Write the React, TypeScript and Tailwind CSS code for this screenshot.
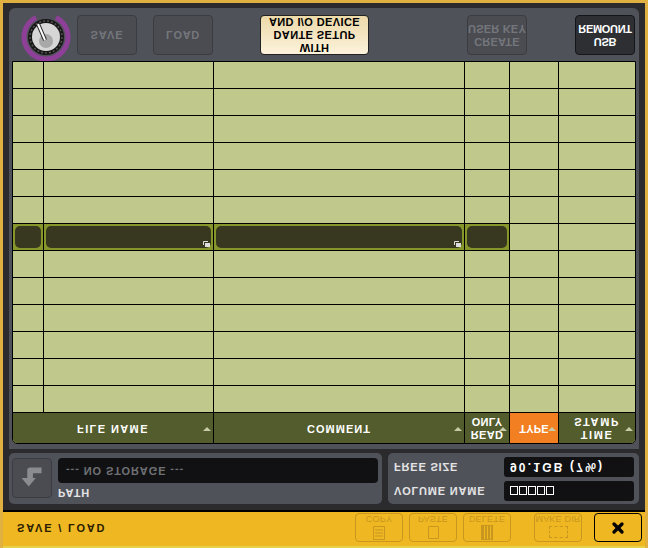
import type { ReactNode } from 'react';
import { X } from 'lucide-react';

const COLS = 'grid grid-cols-[31px_170px_251px_45px_49px_1fr]';
const ROW_COUNT = 13;
const SELECTED_ROW = 6;

// the whole screen is mirrored top to bottom, so every label is too
function Flip({ children, className = '' }: { children: ReactNode; className?: string }) {
  return <div className={`-scale-y-100 whitespace-nowrap ${className}`}>{children}</div>;
}

function Knob() {
  return (
    <svg width="52" height="52" viewBox="0 0 52 52" className="shrink-0">
      <path d="M16 8.4 A 22 22 0 1 0 36 8.4" fill="none" stroke="#8e3f98" strokeWidth="5" />
      <circle cx="26" cy="28" r="18" fill="#161616" />
      <circle cx="26" cy="28" r="16" fill="none" stroke="#555" strokeWidth="1.5" strokeDasharray="2 2" />
      <circle cx="26" cy="28" r="14" fill="#d6d6d6" />
      <circle cx="26" cy="32" r="7" fill="#a8a8a8" />
      <line x1="18" y1="15" x2="25" y2="31" stroke="#222" strokeWidth="4" />
      <line x1="18" y1="15" x2="25" y2="31" stroke="#fff" strokeWidth="2" />
    </svg>
  );
}

function TopButton({ lines, kind, width, tracking }: { lines: string[]; kind: 'off' | 'lit' | 'dark'; width: string; tracking: string }) {
  const look = {
    off: 'border-[#3a3c42] bg-[#4a4c52] text-[#74767b]',
    lit: 'border-[#222] bg-gradient-to-b from-[#ecd9a8] to-[#fdf3dc] text-black',
    dark: 'border-[#15161a] bg-[#2d2f33] text-white',
  }[kind];
  return (
    <div className={`flex h-10 items-center justify-center rounded-[4px] border ${look} ${width}`}>
      <Flip className={`text-center text-[11px] leading-[13px] font-bold ${tracking}`}>
        {lines.map(l => <div key={l}>{l}</div>)}
      </Flip>
    </div>
  );
}

function SortMark() {
  return <span className="absolute top-[14px] right-[2px] h-0 w-0 border-x-[4px] border-b-[4px] border-x-transparent border-b-[#c9cba8]" />;
}

function HeaderCell({ lines, active, border = true, tracking }: { lines: string[]; active?: boolean; border?: boolean; tracking: string }) {
  return (
    <div className={`relative flex items-center justify-center ${active ? 'bg-[#f27f22]' : ''} ${border ? 'border-r border-black' : ''}`}>
      <Flip className={`text-center text-[11px] leading-[13px] font-bold text-white ${tracking}`}>
        {lines.map(l => <div key={l}>{l}</div>)}
      </Flip>
      <SortMark />
    </div>
  );
}

function DarkField({ corner }: { corner?: boolean }) {
  return (
    <div className="relative flex items-stretch border-r border-black bg-[#87962a] p-[2px]">
      <div className="w-full rounded-[5px] bg-[#37381f]" />
      {corner && (
        <svg width="7" height="6" viewBox="0 0 7 6" className="absolute right-[3px] bottom-[3px]">
          <path d="M0.5 4 V0.5 H5" fill="none" stroke="#ddd" />
          <rect x="2" y="2" width="5" height="4" fill="#ddd" />
        </svg>
      )}
    </div>
  );
}

function Row({ selected }: { selected: boolean }) {
  if (selected) {
    return (
      <div className={`${COLS} h-[27px] border-b border-black`}>
        <DarkField />
        <DarkField corner />
        <DarkField corner />
        <DarkField />
        <div className="border-r border-black" />
        <div />
      </div>
    );
  }
  return (
    <div className={`${COLS} h-[27px] border-b border-black`}>
      {[0, 1, 2, 3, 4].map(i => <div key={i} className="border-r border-black" />)}
      <div />
    </div>
  );
}

function ToolButton({ label, icon }: { label: string; icon: ReactNode }) {
  return (
    <div className="flex h-[29px] w-[48px] flex-col items-center overflow-hidden rounded-[4px] border border-[#c9961e] text-[#c9961e]">
      <Flip className="text-[9px] leading-[10px] tracking-[0.2px]">{label}</Flip>
      {icon}
    </div>
  );
}

function InfoRow({ label, children }: { label: string; children: ReactNode }) {
  return (
    <div className="flex items-center justify-between">
      <Flip className="text-[11px] font-bold tracking-[0.8px] text-[#e4e4e4]">{label}</Flip>
      <div className="flex h-5 w-[130px] items-center rounded-[3px] bg-[#111113] pl-[6px]">{children}</div>
    </div>
  );
}

export default function App() {
  return (
    <div className="flex h-[548px] w-[648px] flex-col border-x-[3px] border-t-[3px] border-[#e0b040] bg-[#2b2b2e] font-['Liberation_Sans',sans-serif]">
      <div className="flex min-h-0 flex-1 flex-col px-[6px] pt-[5px]">
        {/* top bar + table */}
        <div className="rounded-t-[6px] bg-[#50525a] px-[3px] pb-[5px]">
          <div className="flex h-[53px] items-center pl-[8px]">
            <Knob />
            <div className="ml-[5px]"><TopButton lines={['SAVE']} kind="off" width="w-[60px]" tracking="tracking-[1px]" /></div>
            <div className="ml-[16px]"><TopButton lines={['LOAD']} kind="off" width="w-[60px]" tracking="tracking-[0.7px]" /></div>
            <div className="ml-[47px]"><TopButton lines={['WITH', 'DANTE SETUP', 'AND I/O DEVICE']} kind="lit" width="w-[109px]" tracking="tracking-[0.4px]" /></div>
            <div className="ml-[98px]"><TopButton lines={['CREATE', 'USER KEY']} kind="off" width="w-[60px]" tracking="tracking-[0.2px]" /></div>
            <div className="ml-[48px]"><TopButton lines={['USB', 'REMOUNT']} kind="dark" width="w-[60px]" tracking="tracking-[-0.3px]" /></div>
          </div>
          <div className="overflow-hidden rounded-b-[5px] border border-black bg-[#c0c88c]">
            {Array.from({ length: ROW_COUNT }, (_, i) => <Row key={i} selected={i === SELECTED_ROW} />)}
            <div className={`${COLS} h-[30px] bg-[#525c2c]`}>
              <div className="relative col-span-2 flex items-center justify-center border-r border-black">
                <Flip className="text-[11px] font-bold tracking-[1.4px] text-white">FILE NAME</Flip>
                <SortMark />
              </div>
              <HeaderCell lines={['COMMENT']} tracking="tracking-[1px]" />
              <HeaderCell lines={['READ', 'ONLY']} tracking="tracking-[0.3px]" />
              <HeaderCell lines={['TYPE']} active tracking="tracking-[0.2px]" />
              <HeaderCell lines={['TIME', 'STAMP']} border={false} tracking="tracking-[1.6px]" />
            </div>
          </div>
        </div>
        {/* path and storage info */}
        <div className="mt-[4px] flex h-[51px] gap-[6px]">
          <div className="flex w-[373px] gap-[6px] rounded-[5px] bg-[#50525a] pt-[5px] pl-[3px]">
            <div className="flex h-[40px] w-[40px] items-center justify-center rounded-[4px] border border-[#3a3c42] bg-[#4a4c52]">
              <svg width="40" height="40" viewBox="0 0 40 40">
                <path d="M30 9 H18 Q15 9 15 12 V20 H9 L16.5 29 L24 20 H21 V15 H30 Z" fill="#8a8c90" />
              </svg>
            </div>
            <div className="flex-1">
              <div className="mr-[4px] flex h-[25px] items-center rounded-[4px] bg-[#111113] pl-[8px]">
                <Flip className="text-[11px] font-bold tracking-[0.9px] text-[#6f7074]">--- NO STORAGE ---</Flip>
              </div>
              <Flip className="mt-[1px] text-[11px] font-bold tracking-[1px] text-[#e4e4e4]">PATH</Flip>
            </div>
          </div>
          <div className="flex flex-1 flex-col justify-center gap-[4px] rounded-[5px] bg-[#50525a] pr-[5px] pl-[6px]">
            <InfoRow label="FREE SIZE">
              <Flip className="text-[12px] font-bold tracking-[2.2px] text-white">90.1GB (7%)</Flip>
            </InfoRow>
            <InfoRow label="VOLUME NAME">
              <div className="flex gap-[1px]">
                {[0, 1, 2, 3, 4].map(i => <span key={i} className="h-[9px] w-[8px] border border-white" />)}
              </div>
            </InfoRow>
          </div>
        </div>
      </div>
      {/* title bar */}
      <div className="mt-[4px] flex h-[38px] items-center justify-between border-t-2 border-b-2 border-t-black border-b-[#e6d24a] bg-[#efb822] pr-[3px] pb-[3px] pl-[14px]">
        <Flip className="text-[11px] font-bold tracking-[1.8px] text-[#2a1c00]">SAVE / LOAD</Flip>
        <div className="flex items-center">
          <ToolButton
            label="COPY"
            icon={
              <svg width="14" height="16" viewBox="0 0 14 16" className="mt-[1px]" fill="none" stroke="#c9961e">
                <path d="M1.5 1.5 H12.5 V14.5 H1.5 Z M3 5 H11 M3 8 H11 M3 11 H11" />
              </svg>
            }
          />
          <div className="ml-[6px]">
            <ToolButton label="PASTE" icon={<span className="mt-[2px] h-[13px] w-[11px] rounded-[1px] border border-[#c9961e]" />} />
          </div>
          <div className="ml-[6px]">
            <ToolButton
              label="DELETE"
              icon={
                <svg width="12" height="15" viewBox="0 0 12 15" className="mt-[1px]" stroke="#efb822">
                  <rect x="0" y="0" width="12" height="15" fill="#c9961e" stroke="none" />
                  <path d="M3.5 1 V14 M6.5 1 V14 M9.5 1 V14" />
                </svg>
              }
            />
          </div>
          <div className="ml-[23px]">
            <ToolButton label="MAKE DIR" icon={<span className="mt-[2px] h-[12px] w-[19px] border border-dashed border-[#c9961e]" />} />
          </div>
          <div className="ml-[12px] flex h-[29px] w-[48px] items-center justify-center rounded-[4px] border border-black">
            <X size={16} strokeWidth={5} className="text-black" />
          </div>
        </div>
      </div>
    </div>
  );
}
